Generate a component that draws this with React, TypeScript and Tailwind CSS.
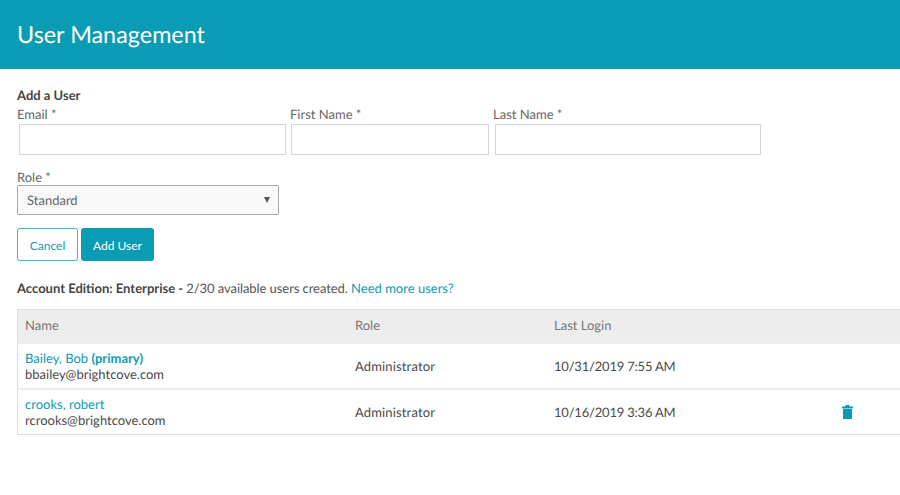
const users = [
  { name: "Bailey, Bob", primary: true, email: "bbailey@brightcove.com", role: "Administrator", login: "10/31/2019 7:55 AM", canDelete: false },
  { name: "crooks, robert", primary: false, email: "rcrooks@brightcove.com", role: "Administrator", login: "10/16/2019 3:36 AM", canDelete: true },
];

function TrashIcon() {
  return (
    <svg width="11" height="14" viewBox="0 0 11 14" className="block">
      <rect x="3.5" y="0" width="4" height="2" fill="#0a9bb5" />
      <rect x="0" y="1.5" width="11" height="2" fill="#0a9bb5" />
      <rect x="1" y="4" width="9" height="10" fill="#0a9bb5" />
    </svg>
  );
}

export default function App() {
  return (
    <div className="min-h-[495px] bg-white font-['Lato','Open_Sans',sans-serif] text-[13px] text-[#4a4a4a] [text-rendering:geometricPrecision]">
      <header className="flex h-[69px] items-center bg-[#0a9bb5] pl-[17px]">
        <h1 className="text-[23.4px] font-normal text-white">User Management</h1>
      </header>

      <main className="pl-[17px] pt-[17px]">
        <h2 className="text-[13px] font-bold leading-[18px] text-[#444]">Add a User</h2>

        <div className="mt-[1px] flex">
          <div className="flex w-[273px] flex-col">
            <label className="h-[18px] leading-[18px] text-[#666]">Email *</label>
            <input className="ml-[2px] mt-[1px] h-[31px] w-[267px] border border-[#d4d4d4] bg-white" />
          </div>
          <div className="flex w-[203px] flex-col">
            <label className="h-[18px] leading-[18px] text-[#666]">First Name *</label>
            <input className="ml-[1px] mt-[1px] h-[31px] w-[198px] border border-[#d4d4d4] bg-white" />
          </div>
          <div className="flex w-[270px] flex-col">
            <label className="h-[18px] leading-[18px] text-[#666]">Last Name *</label>
            <input className="ml-[2px] mt-[1px] h-[31px] w-[266px] border border-[#d4d4d4] bg-white" />
          </div>
        </div>

        <label className="mt-[13px] block h-[18px] leading-[18px] text-[#666]">Role *</label>
        <div className="mt-[-1px] flex h-[30px] w-[262px] items-center justify-between rounded-[1px] border border-[#aaa] bg-[#f8f8f8] pl-[9px] pr-[8px] text-[#666]">
          <span className="pt-[1px]">Standard</span>
          <svg width="6" height="6" viewBox="0 0 6 6" className="block">
            <path d="M0 0H6L3 6Z" fill="#555" />
          </svg>
        </div>

        <div className="mt-[13px] flex gap-[3px]">
          <button className="h-[33px] w-[61px] rounded-[3px] border border-[#3fb3c8] bg-white pt-[2px] text-[12px] text-[#0a9bb5]">Cancel</button>
          <button className="h-[33px] w-[73px] rounded-[3px] bg-[#0a9bb5] pt-[2px] text-[12px] text-white">Add User</button>
        </div>

        <p className="mt-[18px] h-[18px] leading-[18px] text-[#555]">
          <span className="font-bold text-[#444]">Account Edition: Enterprise - </span>
          <span className="tracking-[-0.07px]">2/30 available users created.</span> <a className="text-[#0a9bb5]">Need more users?</a>
        </p>

        <div className="mt-[12px] border-y border-l border-[#dedede]">
          <div className="grid h-[32px] grid-cols-[330px_199px_1fr] items-center bg-[#ededed] pl-[7px] text-[#777]">
            <span>Name</span>
            <span>Role</span>
            <span>Last Login</span>
          </div>
          {users.map((u) => (
            <div key={u.email} className="grid h-[46px] grid-cols-[330px_199px_285px_1fr] items-center border-t-2 border-[#eeeeee] pl-[7px] leading-[16px] text-[#4a4a4a]">
              <div>
                <div className="text-[#0a9bb5]">
                  {u.name} {u.primary && <span className="font-bold">(primary)</span>}
                </div>
                <div>{u.email}</div>
              </div>
              <span className="tracking-[0.15px]">{u.role}</span>
              <span className="tracking-[-0.2px]">{u.login}</span>
              <span className="pl-[3px]">{u.canDelete && <TrashIcon />}</span>
            </div>
          ))}
        </div>
      </main>
    </div>
  );
}
